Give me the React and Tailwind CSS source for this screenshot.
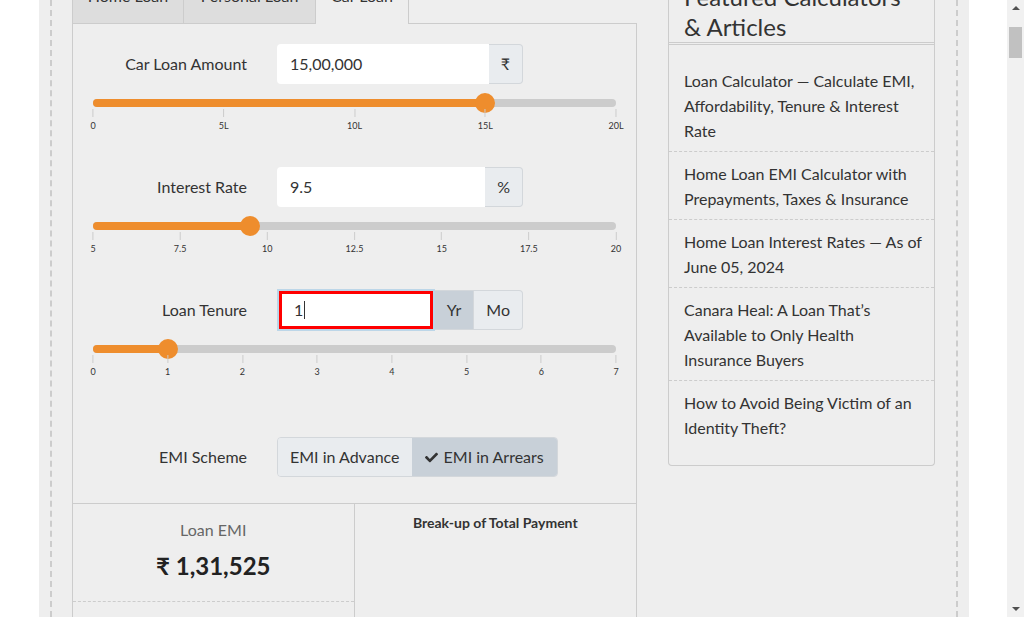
import { FaCheck } from 'react-icons/fa';

function Slider({ pct, ticks }) {
  return (
    <div className="mt-[15px]">
      <div className="relative h-[8px] rounded-full bg-[#cccccc]">
        <div className="h-full rounded-full bg-[#ee8d2d]" style={{ width: pct + '%' }} />
        <div
          className="absolute top-1/2 size-[20px] -translate-x-1/2 -translate-y-1/2 rounded-full bg-[#ee8d2d]"
          style={{ left: pct + '%' }}
        />
      </div>
      <div className="relative h-[24px]">
        {ticks.map((t, i) => (
          <div
            key={t}
            className="absolute top-0 flex -translate-x-1/2 flex-col items-center"
            style={{ left: (i / (ticks.length - 1)) * 100 + '%' }}
          >
            <div className="mt-[2px] h-[8px] w-px bg-[#cccccc]" />
            <div className="mt-[3px] text-[9px] leading-[12px] text-[#333]">{t}</div>
          </div>
        ))}
      </div>
    </div>
  );
}

function Row({ label, children, className = '' }) {
  return (
    <div className={`flex items-center ${className}`}>
      <div className="w-[154px] text-right text-[16px]">{label}</div>
      <div className="ml-[30px] flex h-[40px] w-[246px]">{children}</div>
    </div>
  );
}

function Addon({ children, active }) {
  return (
    <div
      className={`flex items-center border border-l-0 border-[#d3d7db] px-[12px] text-[16px] last:rounded-r-[4px] ${
        active ? 'bg-[#c8d0d8]' : 'bg-[#e9ecef]'
      }`}
    >
      {children}
    </div>
  );
}

const articles = [
  'Loan Calculator — Calculate EMI, Affordability, Tenure & Interest Rate',
  'Home Loan EMI Calculator with Prepayments, Taxes & Insurance',
  'Home Loan Interest Rates — As of June 05, 2024',
  'Canara Heal: A Loan That’s Available to Only Health Insurance Buyers',
  'How to Avoid Being Victim of an Identity Theft?',
];

export default function App() {
  return (
    <div className="flex h-[617px] w-[1024px] overflow-hidden bg-white font-[Lato,sans-serif] text-[#333]">
      <div className="flex-1">
        <div className="ml-[39px] h-full w-[930px] bg-[#eeeeee] px-[11px]">
          <div className="flow-root h-full border-x-2 border-dashed border-[#cccccc] pl-[20px]">
            <div className="mt-[-26px] flex items-start gap-[31px]">
              {/* calculator */}
              <div className="w-[565px]">
                <div className="flex h-[50px] text-[16px] leading-[20px]">
                  <div className="w-[111px] border-b border-l border-t border-[#cccccc] bg-[#dddddd] pt-[11px] text-center">Home Loan</div>
                  <div className="w-[132px] border-b border-l border-t border-[#cccccc] bg-[#dddddd] pt-[11px] text-center">Personal Loan</div>
                  <div className="w-[94px] border-x border-t border-[#cccccc] bg-[#eeeeee] pt-[11px] text-center">Car Loan</div>
                  <div className="flex-1 border-b border-[#cccccc]" />
                </div>

                <div className="border-x border-b border-[#cccccc]">
                  <div className="px-[20px] pt-[20px] pb-[26px]">
                    <Row label="Car Loan Amount">
                      <div className="flex flex-1 items-center rounded-l-[4px] bg-white pl-[13px] text-[16px]">15,00,000</div>
                      <Addon>₹</Addon>
                    </Row>
                    <Slider pct={75} ticks={['0', '5L', '10L', '15L', '20L']} />

                    <Row label="Interest Rate" className="mt-[36px]">
                      <div className="flex flex-1 items-center rounded-l-[4px] bg-white pl-[13px] text-[16px]">9.5</div>
                      <Addon>%</Addon>
                    </Row>
                    <Slider pct={30} ticks={['5', '7.5', '10', '12.5', '15', '17.5', '20']} />

                    <Row label="Loan Tenure" className="mt-[36px]">
                      <div className="my-[1px] ml-[2px] mr-[2px] flex flex-1 items-center border-[3px] border-[#ff0000] bg-white pl-[12px] text-[16px] shadow-[0_0_0_2px_#bcd6e8]">
                        1<span className="ml-px h-[18px] w-px bg-[#333]" />
                      </div>
                      <Addon active>Yr</Addon>
                      <Addon>Mo</Addon>
                    </Row>
                    <Slider pct={100 / 7} ticks={['0', '1', '2', '3', '4', '5', '6', '7']} />

                    <div className="mt-[60px] flex items-center">
                      <div className="w-[154px] text-right text-[16px]">EMI Scheme</div>
                      <div className="ml-[30px] flex h-[40px] overflow-hidden rounded-[4px] border border-[#d3d7db] text-[16px]">
                        <div className="flex items-center bg-[#e9ecef] px-[12px]">EMI in Advance</div>
                        <div className="flex items-center gap-[6px] bg-[#c8d0d8] px-[13px]">
                          <FaCheck className="text-[13px]" />
                          EMI in Arrears
                        </div>
                      </div>
                    </div>
                  </div>

                  <div className="grid grid-cols-2 border-t border-[#cccccc]">
                    <div className="border-r border-[#cccccc]">
                      <div className="pt-[14px] pb-[19px] text-center">
                        <div className="text-[16px] leading-[24px] text-[#666]">Loan EMI</div>
                        <div className="mt-[8px] text-[24px] font-bold leading-[32px] text-[#222]">₹ 1,31,525</div>
                      </div>
                      <div className="h-[60px] border-t border-dashed border-[#cccccc]" />
                    </div>
                    <div className="pt-[10px] text-center text-[14px] font-bold leading-[18px]">Break-up of Total Payment</div>
                  </div>
                </div>
              </div>

              {/* sidebar */}
              <div className="mt-[-1px] w-[267px] rounded-b-[4px] border-x border-b border-[#cccccc]">
                <h3 className="border-b border-[#cccccc] px-[15px] pt-[9px] text-[24px] leading-[30px]">
                  Featured Calculators &amp; Articles
                </h3>
                <ul className="mt-[1px] border-t border-[#cccccc] pt-[14px] pb-[17px]">
                  {articles.map((a, i) => (
                    <li
                      key={a}
                      className={`pl-[15px] pr-[11px] pt-[9px] pb-[8px] text-[16px] leading-[25px] ${
                        i > 0 ? 'border-t border-dashed border-[#cccccc]' : ''
                      }`}
                    >
                      {a}
                    </li>
                  ))}
                </ul>
              </div>
            </div>
          </div>
        </div>
      </div>

      {/* scrollbar */}
      <div className="flex w-[17px] flex-col items-center bg-[#f1f1f1]">
        <div className="mt-[6px] h-0 w-0 border-x-[4px] border-b-[4px] border-x-transparent border-b-[#505050]" />
        <div className="mt-[17px] h-[31px] w-[13px] bg-[#c1c1c1]" />
        <div className="flex-1" />
        <div className="mb-[6px] h-0 w-0 border-x-[4px] border-t-[4px] border-x-transparent border-t-[#505050]" />
      </div>
    </div>
  );
}
